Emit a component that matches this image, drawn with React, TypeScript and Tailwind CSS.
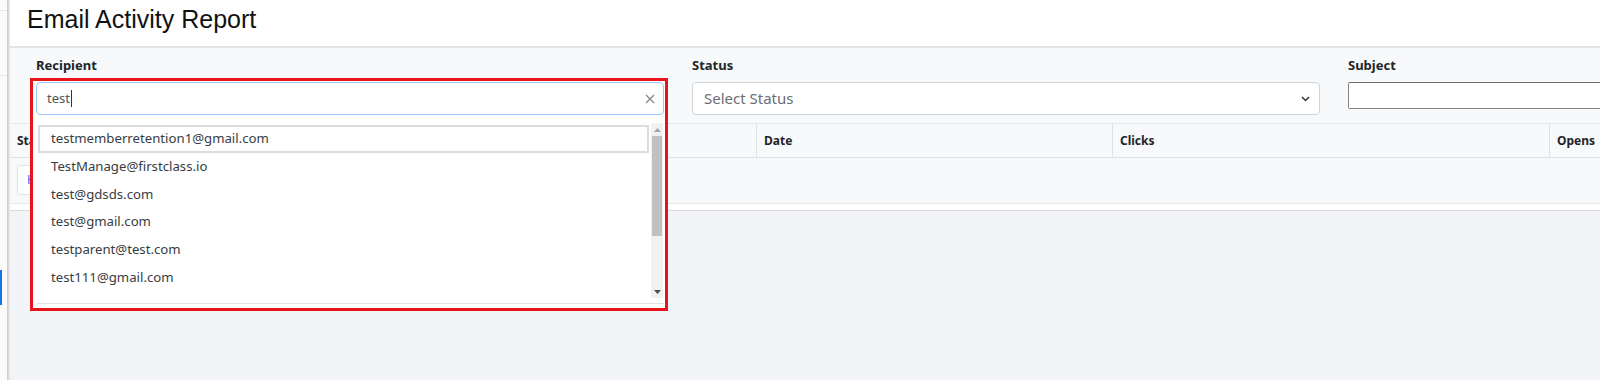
import React from "react";

const ui = { fontFamily: '"Noto Sans", "Open Sans", sans-serif' };

function Scrollbar() {
  return (
    <div className="absolute right-[1px] top-[5px] bottom-[5px] w-[12px] bg-[#f1f1f1] flex flex-col items-center">
      <div className="h-[13px] w-full flex items-center justify-center">
        <svg width="7" height="4" viewBox="0 0 7 4"><path d="M0 4 L3.5 0 L7 4 Z" fill="#a3a3a3" /></svg>
      </div>
      <div className="h-[100px] w-[10px] bg-[#c1c1c1]" />
      <div className="flex-1" />
      <div className="h-[13px] w-full flex items-center justify-center">
        <svg width="7" height="4" viewBox="0 0 7 4"><path d="M0 0 L7 0 L3.5 4 Z" fill="#505050" /></svg>
      </div>
    </div>
  );
}

export default function App() {
  const items = [
    "testmemberretention1@gmail.com",
    "TestManage@firstclass.io",
    "test@gdsds.com",
    "test@gmail.com",
    "testparent@test.com",
    "test111@gmail.com",
  ];
  return (
    <div className="w-[1600px] h-[380px] overflow-hidden flex bg-[#f3f4f7]" style={ui}>
      {/* background page strip */}
      <div className="w-[7px] shrink-0 bg-[#fbfbfb] flex flex-col">
        <div className="h-[10px]" />
        <div className="h-px bg-[#e6e6e6]" />
        <div className="h-[64px]" />
        <div className="h-px bg-[#e6e6e6]" />
        <div className="h-[194px]" />
        <div className="h-[35px] w-[2px] bg-[#1a73e8]" />
        <div className="flex-1" />
      </div>
      <div className="w-[3px] shrink-0 bg-gradient-to-r from-[#c9c9c9] to-[#eeeeee]" />

      {/* main panel */}
      <div className="flex-1 flex flex-col min-w-0">
        <div className="h-[48px] shrink-0 bg-white border-b-2 border-[#e2e4e7] pl-[17px] pt-[4px]">
          <h1 className="text-[25px] leading-[30px] text-[#111]" style={{ fontFamily: '"Liberation Sans", Arial, sans-serif' }}>
            Email Activity Report
          </h1>
        </div>

        {/* filters */}
        <div className="h-[75px] bg-[#f8f9fa] flex gap-[28px] pl-[26px] pt-[7px] shrink-0">
          {/* Recipient */}
          <div className="w-[628px] shrink-0 flex flex-col">
            <label className="text-[13px] leading-[20px] font-bold text-[#212529] mb-[7px]">Recipient</label>
            <div className="relative h-[33px]">
              {/* annotation box */}
              <div className="absolute left-[-6px] top-[-4px] w-[638px] h-[233px] border-[3px] border-[#e8141c] bg-white z-10" />
              <div className="absolute inset-0 z-20 flex items-center bg-white border border-[#9ec5fe] rounded-[4px] pl-[10px] pr-[8px]">
                <span className="text-[13px] text-[#555]">test</span>
                <span className="w-px h-[17px] bg-[#333] ml-[1px]" />
                <span className="flex-1" />
                <svg width="10" height="10" viewBox="0 0 10 10"><path d="M1 1 L9 9 M9 1 L1 9" stroke="#8a8a8a" strokeWidth="1.4" /></svg>
              </div>
              {/* dropdown */}
              <div className="absolute left-[1px] top-[36px] w-[627px] h-[186px] z-20 bg-white border-b border-[#e2e2e2]">
                <div className="pt-[7px] pl-[1px] pr-[15px] flex flex-col">
                  {items.map((t, i) => (
                    <div
                      key={t}
                      className={
                        "h-[27.8px] flex items-center pl-[11px] text-[13.2px] text-[#383c42] border-2 " +
                        (i === 0 ? "border-[#dcdcdc]" : "border-transparent")
                      }
                    >
                      {t}
                    </div>
                  ))}
                </div>
                <Scrollbar />
              </div>
            </div>
          </div>

          {/* Status */}
          <div className="w-[628px] shrink-0 flex flex-col">
            <label className="text-[13px] leading-[20px] font-bold text-[#212529] mb-[7px]">Status</label>
            <div className="h-[33px] bg-white border border-[#ced4da] rounded-[4px] flex items-center pl-[11px] pr-[9px]">
              <span className="text-[15px] text-[#6a6e73] flex-1">Select Status</span>
              <svg width="9" height="6" viewBox="0 0 9 6"><path d="M1 1 L4.5 4.5 L8 1" stroke="#333" strokeWidth="1.5" fill="none" /></svg>
            </div>
          </div>

          {/* Subject */}
          <div className="w-[628px] shrink-0 flex flex-col">
            <label className="text-[13px] leading-[20px] font-bold text-[#212529] mb-[7px]">Subject</label>
            <div className="h-[27px] bg-white border border-[#858585] border-t-[#6e6e6e] rounded-[2px]" />
          </div>
        </div>

        {/* table */}
        <div className="border-t border-[#e6e8eb] shrink-0">
          <div className="h-[34px] bg-[#f8f9fa] border-b border-[#dee2e6] flex text-[12px] font-bold text-[#212529]">
            <div className="w-[390px] shrink-0 pl-[7px] flex items-center">Status</div>
            <div className="w-[356px] shrink-0 pl-[7px] flex items-center border-l border-[#dee2e6]">Recipient</div>
            <div className="w-[356px] shrink-0 pl-[7px] flex items-center border-l border-[#dee2e6]">Date</div>
            <div className="w-[437px] shrink-0 pl-[7px] flex items-center border-l border-[#dee2e6]">Clicks</div>
            <div className="flex-1 pl-[7px] flex items-center border-l border-[#dee2e6]">Opens</div>
          </div>
          <div className="h-[46px] bg-[#f8f9fa] border-b border-[#e6e8eb] pl-[7px] pt-[7px]">
            <div className="h-[30px] w-[120px] bg-white border border-[#dee2e6] rounded-[4px] flex items-center pl-[9px] text-[12px] text-[#0d6efd]">
              H
            </div>
          </div>
          <div className="h-[7px] bg-white border-b border-[#dadcdf]" />
        </div>
        <div className="flex-1" />
      </div>
    </div>
  );
}
